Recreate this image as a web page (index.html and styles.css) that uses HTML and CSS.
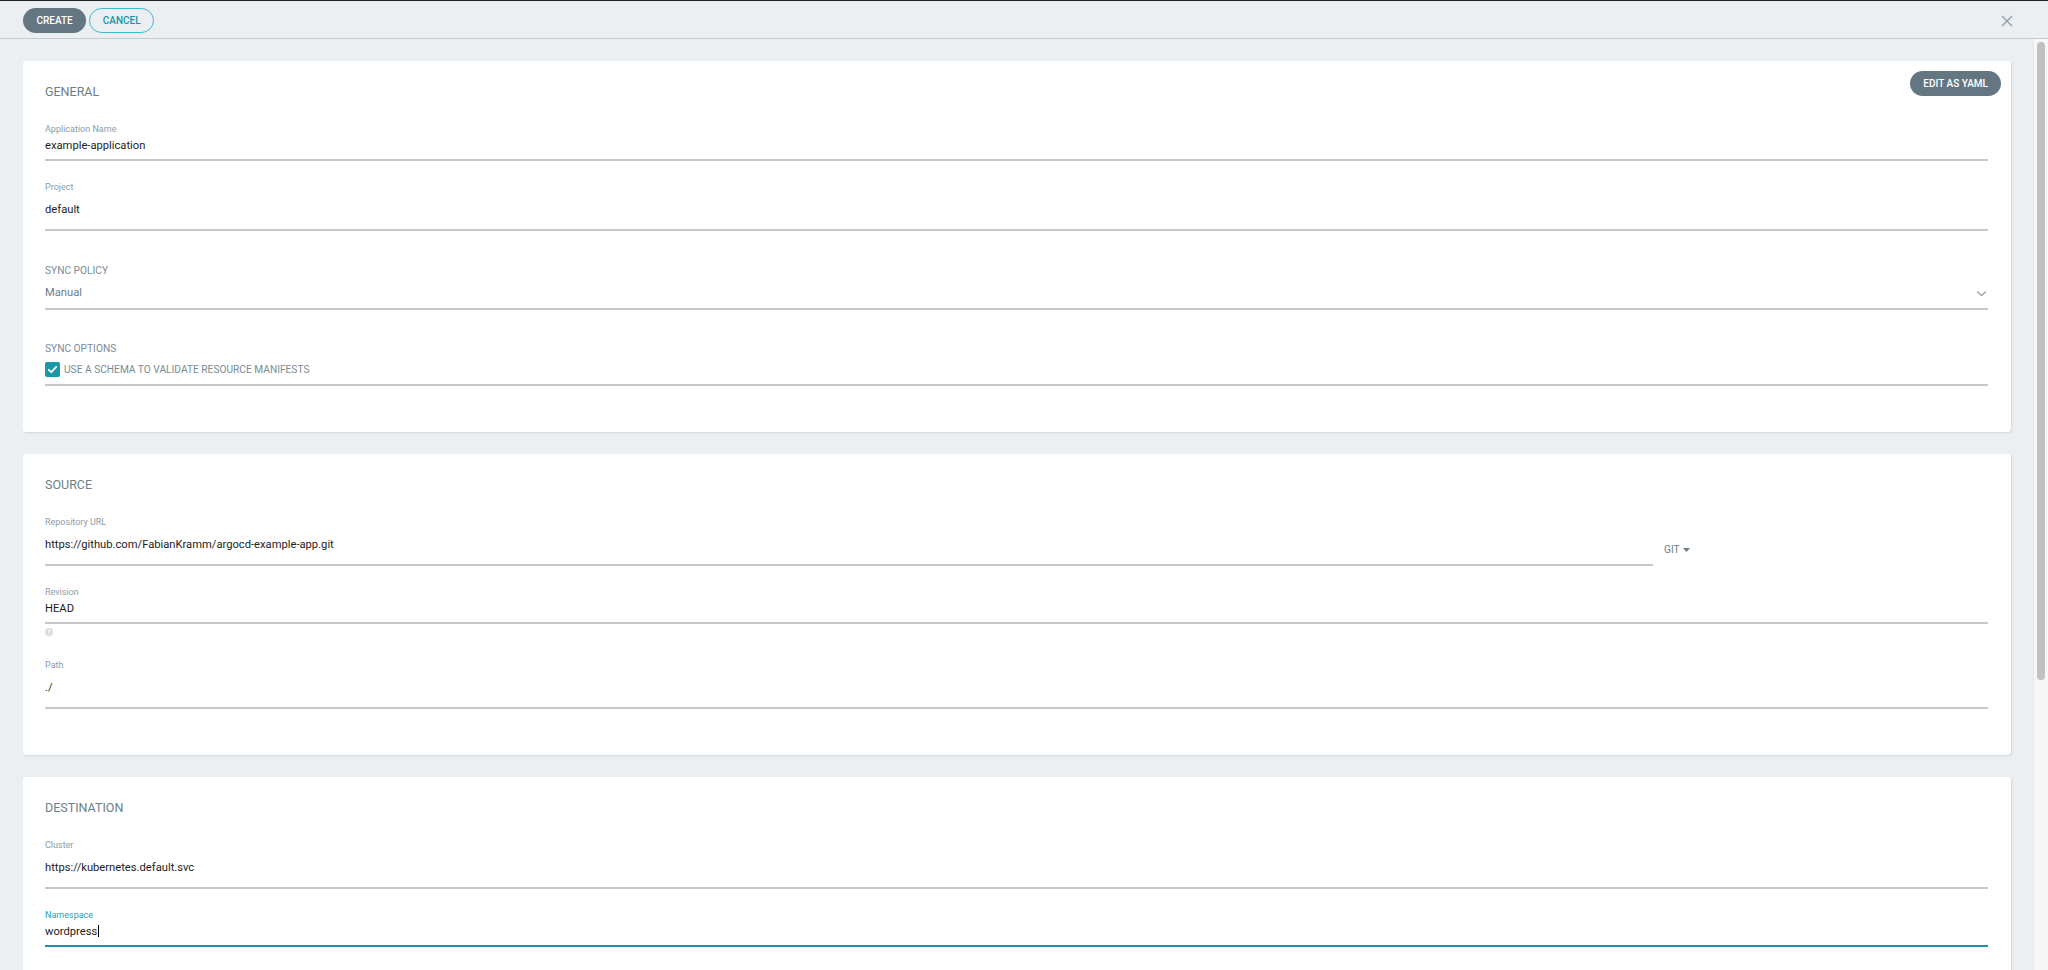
FILE: index.html
```html
<!DOCTYPE html>
<html lang="en">
<head>
<meta charset="utf-8">
<title>New Application</title>
<link rel="stylesheet" href="styles.css">
</head>
<body>
<div class="app">
  <header class="topbar">
    <div class="actions">
      <button class="btn btn-primary">CREATE</button>
      <button class="btn btn-outline">CANCEL</button>
    </div>
    <svg class="close" width="12" height="12" viewBox="0 0 12 12"><path d="M1 1L11 11M11 1L1 11" stroke="#8b9ba7" stroke-width="1.3" fill="none"/></svg>
  </header>

  <div class="main">
    <main class="content">
      <section class="card">
        <button class="btn btn-primary yaml">EDIT AS YAML</button>
        <h2 class="card-title">GENERAL</h2>
        <div class="field">
          <div class="label">Application Name</div>
          <div class="value tight">example-application</div>
        </div>
        <div class="field gap">
          <div class="label">Project</div>
          <div class="value loose">default</div>
        </div>
        <div class="field gap-lg">
          <div class="upper-label">SYNC POLICY</div>
          <div class="value select">
            <span>Manual</span>
            <svg class="chevron" width="11" height="7" viewBox="0 0 11 7"><path d="M1 1.5L5.5 5.5L10 1.5" fill="none" stroke="#8fa0ab" stroke-width="1.2"/></svg>
          </div>
        </div>
        <div class="field gap-lg2">
          <div class="upper-label">SYNC OPTIONS</div>
          <div class="value check-row">
            <span class="checkbox"><svg width="15" height="15" viewBox="0 0 15 15"><path d="M3.8 7.8L6.3 10.2L11.2 4.9" fill="none" stroke="#fff" stroke-width="1.8" stroke-linecap="round" stroke-linejoin="round"/></svg></span>
            <span class="check-text">USE A SCHEMA TO VALIDATE RESOURCE MANIFESTS</span>
          </div>
        </div>
      </section>

      <section class="card">
        <h2 class="card-title">SOURCE</h2>
        <div class="repo-row">
          <div class="field">
            <div class="label">Repository URL</div>
            <div class="value loose">https://github.com/FabianKramm/argocd-example-app.git</div>
          </div>
          <div class="git">
            <span>GIT</span>
            <svg width="7" height="4" viewBox="0 0 7 4"><path d="M0 0H7L3.5 4Z" fill="#6d7f8b"/></svg>
          </div>
        </div>
        <div class="field gap">
          <div class="label">Revision</div>
          <div class="value tight">HEAD</div>
          <div class="help">?</div>
        </div>
        <div class="field gap-path">
          <div class="label">Path</div>
          <div class="value loose">./</div>
        </div>
      </section>

      <section class="card">
        <h2 class="card-title">DESTINATION</h2>
        <div class="field">
          <div class="label">Cluster</div>
          <div class="value loose">https://kubernetes.default.svc</div>
        </div>
        <div class="field gap focused">
          <div class="label">Namespace</div>
          <div class="value tight">wordpress<span class="caret"></span></div>
        </div>
      </section>
    </main>

    <div class="scrollbar"><div class="thumb"></div></div>
  </div>
</div>
</body>
</html>
```

FILE: styles.css
```css
* { box-sizing: border-box; }

html, body {
  margin: 0;
  height: 100%;
}

body {
  font-family: Roboto, "Liberation Sans", sans-serif;
  background: #eceff2;
  overflow: hidden;
}

.app {
  display: flex;
  flex-direction: column;
  height: 100vh;
}

/* ---------- top bar ---------- */
.topbar {
  flex: none;
  height: 39px;
  border-top: 1px solid #222;
  border-bottom: 1px solid #c3cbd0;
  background: #eceff2;
  display: flex;
  justify-content: space-between;
  align-items: flex-start;
  padding: 7px 35px 0 23px;
}

.actions {
  display: flex;
  gap: 3px;
}

.btn {
  height: 25px;
  border-radius: 13px;
  border: 1px solid transparent;
  font-family: Roboto, "Liberation Sans", sans-serif;
  font-size: 10px;
  font-weight: 500;
  line-height: 23px;
  padding: 0 12.5px;
  cursor: pointer;
}

.btn-primary {
  background: #657683;
  color: #fff;
}

.btn-outline {
  background: transparent;
  border-color: #41b9cc;
  color: #1a94a6;
}

.close {
  margin-top: 6.5px;
}

/* ---------- main area ---------- */
.main {
  flex: 1;
  min-height: 0;
  display: flex;
}

.content {
  flex: 1;
  min-width: 0;
  overflow: hidden;
  padding: 22px 22px 22px 23px;
  display: flex;
  flex-direction: column;
  gap: 22px;
}

.scrollbar {
  flex: none;
  width: 15px;
  background: #f7f7f7;
  border-left: 1px solid #e4e6e8;
  padding: 3px 3px 0 3px;
}

.thumb {
  height: 638px;
  border-radius: 4px;
  background: #c1c1c1;
}

.card {
  flex: none;
  position: relative;
  background: #fff;
  border-radius: 3px;
  box-shadow: 1px 1px 2px rgba(0, 0, 0, 0.11);
  padding: 23px 23px 46px 22px;
}

.card-title {
  margin: 0 0 24px;
  font-size: 12.5px;
  font-weight: 400;
  line-height: 16px;
  color: #6d7f8b;
}

.yaml {
  position: absolute;
  top: 10px;
  right: 10px;
  padding: 0 12px;
}

/* ---------- fields ---------- */
.field.gap { margin-top: 21px; }
.field.gap-lg { margin-top: 33.5px; }
.field.gap-lg2 { margin-top: 33px; }
.field.gap-path { margin-top: 24px; }

.label {
  font-size: 9px;
  line-height: 11px;
  color: #8c9ca7;
}

.upper-label {
  font-size: 10.2px;
  line-height: 12px;
  color: #7a8b96;
}

.value {
  font-size: 11.2px;
  line-height: 14px;
  color: #1d1d1d;
  border-bottom: 2px solid #c8c8c8;
}

.tight { padding: 4px 0 6px; }
.loose { padding: 10px 0 12px; }

.select {
  padding: 9px 0 8px;
  display: flex;
  justify-content: space-between;
  align-items: center;
  color: #6d7f8b;
}

.chevron {
  margin-right: 1px;
  margin-top: 2px;
}

.check-row {
  padding: 7.5px 0 6.5px;
  display: flex;
  align-items: center;
  gap: 4px;
}

.checkbox {
  width: 15px;
  height: 15px;
  border-radius: 2px;
  background: #1b97a7;
  display: flex;
}

.check-text {
  font-size: 10.2px;
  line-height: 12px;
  color: #7a8b96;
}

.repo-row {
  display: grid;
  grid-template-columns: 1fr 324px;
  column-gap: 11px;
  align-items: start;
}

.git {
  padding-top: 27.5px;
  display: flex;
  align-items: center;
  gap: 3px;
  font-size: 10.2px;
  line-height: 12px;
  color: #6d7f8b;
}

.help {
  margin-top: 4px;
  width: 8px;
  height: 8px;
  border-radius: 50%;
  background: #d9dee2;
  color: #fff;
  font-size: 6px;
  line-height: 8px;
  text-align: center;
  font-weight: 700;
}

.focused .label { color: #27a3b5; }
.focused .value { border-bottom-color: #1893a3; }

.caret {
  display: inline-block;
  width: 1px;
  height: 12px;
  background: #000;
  vertical-align: -2px;
  margin-left: 1px;
}
```
